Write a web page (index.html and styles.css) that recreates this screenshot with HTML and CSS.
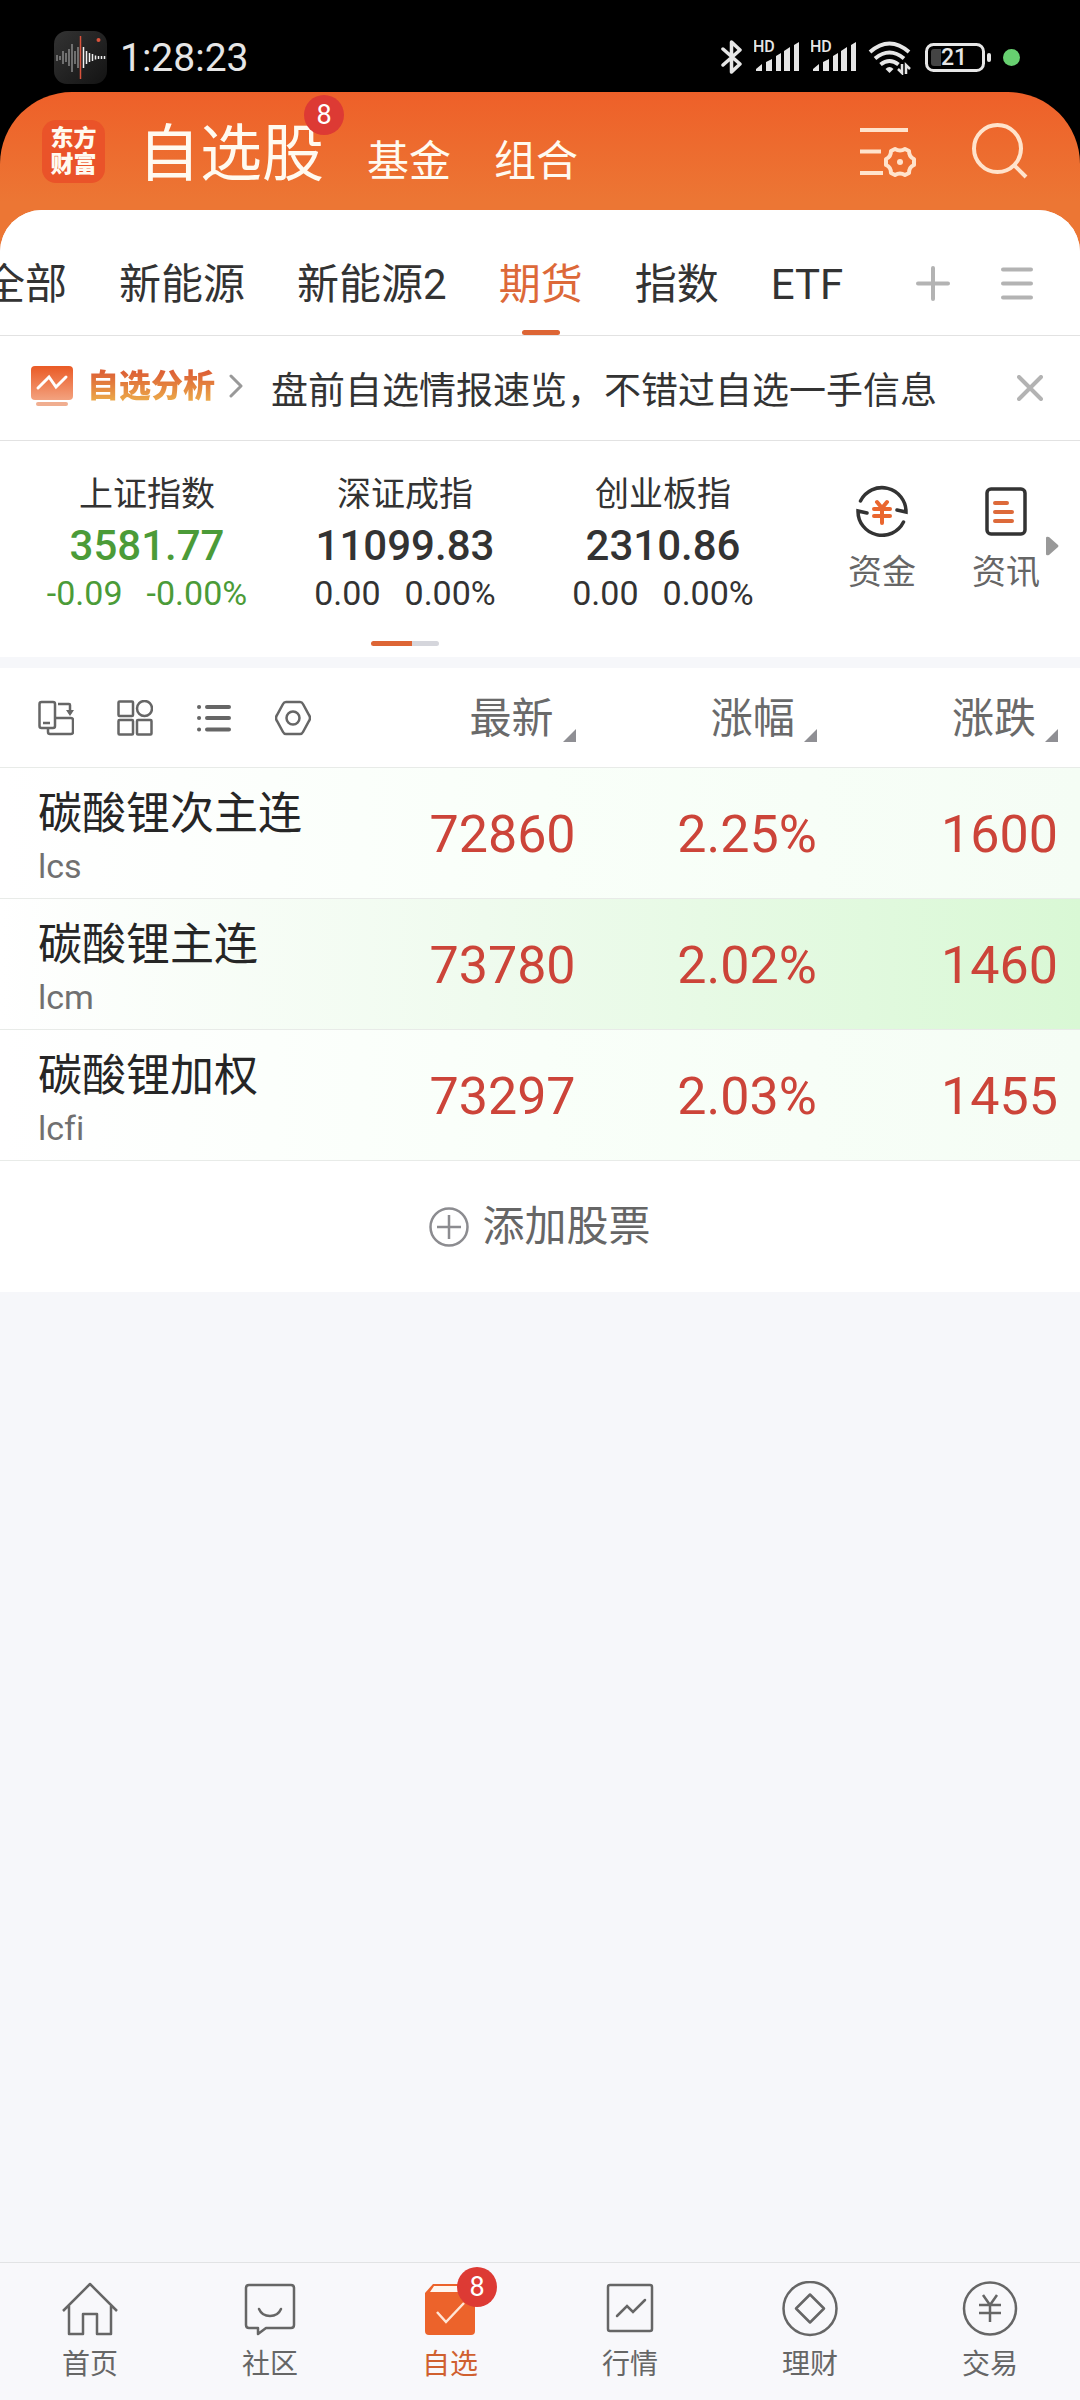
FILE: index.html
```
<!DOCTYPE html>
<html lang="zh-CN">
<head>
  <meta charset="UTF-8">
  <meta name="viewport" content="width=device-width, initial-scale=1.0">
  <title>自选股</title>
  <link rel="stylesheet" href="styles.css">
</head>
<body>
  <div class="screen">

    <div class="status-bar">
      <svg class="recorder" width="53" height="53" viewBox="0 0 53 53">
        <defs>
          <linearGradient id="rec" x1="0" y1="0" x2="1" y2="1">
            <stop offset="0" stop-color="#333"/>
            <stop offset="1" stop-color="#131313"/>
          </linearGradient>
        </defs>
        <rect width="53" height="53" rx="13" fill="url(#rec)"/>
        <path d="M3 24v6M6 25v4M9 20v13M12 22v9M15 18v17M18 13v28M21 20v13M24 16v21" stroke="#888" stroke-width="1.5"/>
        <path d="M29.500 16v21M32.500 20v13M35.500 22v9M38.500 23v7M41.500 24.500v4M44.500 25v3M47.500 25v3M50.500 25v3" stroke="#f0f0f0" stroke-width="1.500"/>
        <path d="M26.500 5v43" stroke="#d9533c" stroke-width="1.500"/>
        <circle cx="44.500" cy="9" r="2" fill="#d9533c"/>
      </svg>
      <span class="clock">1:28:23</span>
      <div class="status-icons">
        <svg width="21" height="36" viewBox="0 0 21 36" fill="none" stroke="#e6e6e6" stroke-width="3.500" stroke-linecap="round" stroke-linejoin="round">
          <path d="M2 10l17 15-8.500 8V3l8.500 8L2 26"/>
        </svg>
        <svg width="45" height="36" viewBox="0 0 45 36" fill="#e6e6e6">
          <text class="hd" x="-1" y="13">HD</text>
          <path d="M2 30l6-5v7H2zM12 23l6-3v12h-6zM22 17l5-3v18h-5zM30 12l6-4v24h-6zM40 6l5-3v29h-5z"/>
        </svg>
        <svg width="45" height="36" viewBox="0 0 45 36" fill="#e6e6e6">
          <text class="hd" x="-1" y="13">HD</text>
          <path d="M2 30l6-5v7H2zM12 23l6-3v12h-6zM22 17l5-3v18h-5zM30 12l6-4v24h-6zM40 6l5-3v29h-5z"/>
        </svg>
        <svg width="45" height="36" viewBox="0 0 45 36" fill="none" stroke="#e6e6e6" stroke-width="4">
          <path d="M2 13q19.500-17 39 0M7 19.500q14.500-12 29 0M12.500 25.500q9-7 18 0"/>
          <path d="M21.500 34l-4-4q4-4 8 0z" fill="#e6e6e6" stroke="none"/>
          <path d="M34 25v9l-4-4M38 35v-9l4 4" stroke-width="2.500"/>
        </svg>
        <svg width="66" height="30" viewBox="0 0 66 30">
          <rect x="1.500" y="2.500" width="57" height="26" rx="7" fill="none" stroke="#e6e6e6" stroke-width="3"/>
          <path d="M9 7h7v17H9q-3 0-3-3V10q0-3 3-3z" fill="#444"/>
          <rect x="62" y="11" width="4" height="9" rx="2" fill="#e6e6e6"/>
          <text class="level" x="29" y="23" text-anchor="middle">21</text>
        </svg>
        <span class="mic-dot"></span>
      </div>
    </div>

    <div class="shell">
      <header class="header">
        <a class="logo" href="#">东方<br>财富</a>
        <nav class="sections">
          <a class="section current" href="#">自选股<span class="badge">8</span></a>
          <a class="section" href="#">基金</a>
          <a class="section" href="#">组合</a>
        </nav>
        <div class="header-actions">
          <button type="button" aria-label="列表设置">
            <svg width="56" height="56" viewBox="0 0 56 56" fill="none" stroke="#ffe3cc" stroke-width="4">
              <path d="M0 7h48M0 28.500h21M0 50h23"/>
              <path d="M35 26q5 3 10 0l4 2q0 6 5 8v6q-5 2-5 8l-4 2q-5-3-10 0l-4-2q0-6-5-8v-6q5-2 5-8z" stroke-linejoin="round"/>
              <circle cx="40" cy="39" r="3" fill="#ffe3cc" stroke="none"/>
            </svg>
          </button>
          <button type="button" aria-label="搜索">
            <svg width="56" height="56" viewBox="0 0 56 56" fill="none" stroke="#ffe3cc" stroke-width="4">
              <circle cx="25.500" cy="25.500" r="23.500"/>
              <path d="M42 42l12 12"/>
            </svg>
          </button>
        </div>
      </header>

      <main class="sheet">
        <div class="groups">
          <nav class="group-list">
            <a href="#">全部</a>
            <a href="#">新能源</a>
            <a href="#">新能源2</a>
            <a class="active" href="#">期货</a>
            <a href="#">指数</a>
            <a href="#">ETF</a>
          </nav>
          <div class="group-actions">
            <button type="button" aria-label="添加分组">
              <svg width="34" height="36" viewBox="0 0 34 36" stroke="#b3b3b3" stroke-width="4" stroke-linecap="round">
                <path d="M17 3v31M2 18.500h30"/>
              </svg>
            </button>
            <button type="button" aria-label="管理分组">
              <svg width="34" height="36" viewBox="0 0 34 36" stroke="#b3b3b3" stroke-width="4" stroke-linecap="round">
                <path d="M3 4.500h28M3 18.500h28M3 32.500h28"/>
              </svg>
            </button>
          </div>
        </div>

        <div class="notice">
          <a class="analysis" href="#">
            <svg width="42" height="40" viewBox="0 0 42 40">
              <defs>
                <linearGradient id="chart" x1="0" y1="0" x2="0" y2="1">
                  <stop offset="0" stop-color="#ea5a25"/>
                  <stop offset="1" stop-color="#f3a27f"/>
                </linearGradient>
              </defs>
              <rect width="42" height="34" rx="4" fill="url(#chart)"/>
              <path d="M7 22l11-11 7 10 10-10" fill="none" stroke="#fff" stroke-width="3" stroke-linecap="round"/>
              <rect x="5" y="36" width="32" height="4" rx="2" fill="#f0ae90"/>
            </svg>
            <strong>自选分析</strong>
            <svg width="14" height="24" viewBox="0 0 14 24" fill="none" stroke="#999" stroke-width="3" stroke-linecap="round" stroke-linejoin="round">
              <path d="M2 2l10 10L2 22"/>
            </svg>
          </a>
          <a class="notice-text" href="#">盘前自选情报速览，不错过自选一手信息</a>
          <button type="button" aria-label="关闭">
            <svg width="26" height="26" viewBox="0 0 26 26" stroke="#b3b3b3" stroke-width="4" stroke-linecap="round">
              <path d="M2 2l22 22M24 2L2 24"/>
            </svg>
          </button>
        </div>

        <section class="market">
          <div class="quotes">
            <div class="quote-row">
              <div class="quote down">
                <span class="quote-name">上证指数</span>
                <span class="quote-value">3581.77</span>
                <span class="quote-change"><span>-0.09</span><span>-0.00%</span></span>
              </div>
              <div class="quote">
                <span class="quote-name">深证成指</span>
                <span class="quote-value">11099.83</span>
                <span class="quote-change"><span>0.00</span><span>0.00%</span></span>
              </div>
              <div class="quote">
                <span class="quote-name">创业板指</span>
                <span class="quote-value">2310.86</span>
                <span class="quote-change"><span>0.00</span><span>0.00%</span></span>
              </div>
            </div>
            <div class="pager"></div>
          </div>
          <div class="shortcuts">
            <a class="shortcut" href="#">
              <svg width="52" height="52" viewBox="0 0 52 52" fill="none" stroke="#333" stroke-width="3.500" stroke-linecap="round">
                <path d="M4.500 16A24 24 0 0 1 50 27l-9-2"/>
                <path d="M47.500 37A24 24 0 0 1 2 26l9 2"/>
                <path d="M21 17l5 6 5-6M18 24h16M18 31h16M26 24v14" stroke="#ea662e" stroke-width="4"/>
              </svg>
              <span>资金</span>
            </a>
            <a class="shortcut" href="#">
              <svg width="52" height="52" viewBox="0 0 52 52" fill="none" stroke="#333" stroke-width="3.500" stroke-linecap="round">
                <rect x="7" y="4" width="38" height="45" rx="4"/>
                <path d="M15 18h12M15 27h17M15 36h17" stroke="#dd6a3a" stroke-width="4"/>
              </svg>
              <span>资讯</span>
            </a>
            <svg class="more" width="13" height="20" viewBox="0 0 13 20" fill="#999">
              <path d="M0 2q0-2 3-1l9 8q1 1 0 2l-9 8q-3 1-3-1z"/>
            </svg>
          </div>
        </section>

        <table class="stocks">
          <thead>
            <tr>
              <th>
                <div class="tools">
                  <button type="button" aria-label="横屏">
                    <svg width="36" height="36" viewBox="0 0 36 36" fill="none" stroke="#666" stroke-width="2.500">
                      <rect x="1.500" y="2" width="15.500" height="26" rx="2"/>
                      <path d="M17 18h16q2 0 2 2v12q0 2-2 2H12q-2 0-2-2v-4M20 4h11q1 0 1 1v9M5 23h7"/>
                      <path d="M28 10h8l-4 6z" fill="#666" stroke="none"/>
                    </svg>
                  </button>
                  <button type="button" aria-label="宫格">
                    <svg width="36" height="36" viewBox="0 0 36 36" fill="none" stroke="#666" stroke-width="2.500">
                      <rect x="1.500" y="1.500" width="14.500" height="14.500" rx="1"/>
                      <circle cx="27.500" cy="8.500" r="7.500"/>
                      <rect x="1.500" y="20" width="14.500" height="14.500" rx="1"/>
                      <rect x="20" y="20" width="14.500" height="14.500" rx="1"/>
                    </svg>
                  </button>
                  <button type="button" aria-label="列表">
                    <svg width="36" height="36" viewBox="0 0 36 36" fill="none" stroke="#666" stroke-width="4" stroke-linecap="round">
                      <path d="M3 7h.1M3 18h.1M3 29.500h.1M11 7h22M11 18h22M11 29.500h22"/>
                    </svg>
                  </button>
                  <button type="button" aria-label="设置">
                    <svg width="36" height="36" viewBox="0 0 36 36" fill="none" stroke="#666" stroke-width="2.500">
                      <path d="M11 2h14q2 0 3 2l6 11q2 3 0 6l-6 11q-1 2-3 2H11q-2 0-3-2L2 21q-2-3 0-6L8 4q1-2 3-2z"/>
                      <circle cx="18" cy="18" r="6.500"/>
                    </svg>
                  </button>
                </div>
              </th>
              <th><button class="sort" type="button">最新</button></th>
              <th><button class="sort" type="button">涨幅</button></th>
              <th><button class="sort" type="button">涨跌</button></th>
            </tr>
          </thead>
          <tbody>
            <tr>
              <td><span class="name">碳酸锂次主连</span><span class="code">lcs</span></td>
              <td>72860</td>
              <td>2.25%</td>
              <td>1600</td>
            </tr>
            <tr class="flash">
              <td><span class="name">碳酸锂主连</span><span class="code">lcm</span></td>
              <td>73780</td>
              <td>2.02%</td>
              <td>1460</td>
            </tr>
            <tr>
              <td><span class="name">碳酸锂加权</span><span class="code">lcfi</span></td>
              <td>73297</td>
              <td>2.03%</td>
              <td>1455</td>
            </tr>
          </tbody>
        </table>

        <button class="add-stock" type="button">
          <svg width="40" height="40" viewBox="0 0 40 40" fill="none" stroke="#8c8c90" stroke-width="2.500">
            <circle cx="20" cy="20" r="18.500"/>
            <path d="M20 8v24M8 20h24"/>
          </svg>
          添加股票
        </button>
      </main>

      <nav class="tab-bar">
        <a class="tab" href="#">
          <svg width="58" height="58" viewBox="0 0 58 58" fill="none" stroke="#666" stroke-width="2.500" stroke-linejoin="round">
            <path d="M2 30L29 3l27 27M8 25v28h14V33h14v20h14V25"/>
          </svg>
          <span>首页</span>
        </a>
        <a class="tab" href="#">
          <svg width="58" height="58" viewBox="0 0 58 58" fill="none" stroke="#666" stroke-width="2.500" stroke-linejoin="round">
            <path d="M8 4h42q3 0 3 3v37q0 3-3 3H25l-8 6v-6H8q-3 0-3-3V7q0-3 3-3z"/>
            <path d="M18 28q3 7 11 7t11-7" stroke-linecap="round"/>
          </svg>
          <span>社区</span>
        </a>
        <a class="tab current" href="#">
          <svg width="58" height="58" viewBox="0 0 58 58">
            <path d="M12 3h34l8 10v37q0 4-4 4H8q-4 0-4-4V12z" fill="#ec632b"/>
            <path d="M13 5h32l5 6H9z" fill="#fff6ef"/>
            <path d="M16 31l9 10 18-19" fill="none" stroke="#ffe5d5" stroke-width="2.500"/>
          </svg>
          <span>自选</span>
          <span class="badge">8</span>
        </a>
        <a class="tab" href="#">
          <svg width="58" height="58" viewBox="0 0 58 58" fill="none" stroke="#666" stroke-width="2.500">
            <rect x="7" y="4" width="44" height="46" rx="2"/>
            <path d="M16 35l10-10 6 6 12-12" stroke-linecap="round"/>
          </svg>
          <span>行情</span>
        </a>
        <a class="tab" href="#">
          <svg width="58" height="58" viewBox="0 0 58 58" fill="none" stroke="#666" stroke-width="2.500" stroke-linejoin="round">
            <circle cx="29" cy="27.500" r="26.500"/>
            <path d="M29 13.500l14 14-14 14-14-14z"/>
          </svg>
          <span>理财</span>
        </a>
        <a class="tab" href="#">
          <svg width="58" height="58" viewBox="0 0 58 58" fill="none" stroke="#666" stroke-width="2.500">
            <circle cx="29" cy="27.500" r="26"/>
            <path d="M22 14l7 10 7-10M18 24h22M18 32h22M29 24v17"/>
          </svg>
          <span>交易</span>
        </a>
      </nav>
    </div>

  </div>
</body>
</html>
```
FILE: styles.css
```
* {
  box-sizing: border-box;
}

body {
  margin: 0;
  font-family: Roboto, "Noto Sans CJK SC", sans-serif;
  font-variant-ligatures: none;
  color: #333;
}

a {
  color: inherit;
  text-decoration: none;
}

button {
  padding: 0;
  border: none;
  background: none;
  color: inherit;
  font: inherit;
  cursor: pointer;
}

svg {
  display: block;
  flex: none;
}

.screen {
  display: flex;
  flex-direction: column;
  min-height: 100vh;
  background-color: #000;
}

/* phone status bar */
.status-bar {
  display: flex;
  align-items: center;
  height: 92px;
  padding: 22px 60px 0 54px;
  color: #e6e6e6;
}

.clock {
  padding-top: 2px;
  margin-left: 13px;
  font-size: 39px;
}

.status-icons {
  display: flex;
  align-items: center;
  gap: 12px;
  margin-left: auto;
}

.hd {
  font-size: 16px;
  font-weight: 500;
}

.level {
  font-size: 23px;
  font-weight: 500;
  fill: #e6e6e6;
}

.mic-dot {
  width: 17px;
  height: 17px;
  border-radius: 50%;
  background-color: #67d070;
}

/* header */
.shell {
  flex: 1;
  display: flex;
  flex-direction: column;
  border-radius: 72px 72px 0 0;
  background: linear-gradient(#ee6029, #ec7634 110px);
}

.header {
  display: flex;
  align-items: center;
  height: 118px;
  padding: 0 52px 0 42px;
  color: #fffaf0;
}

.logo {
  width: 63px;
  height: 63px;
  padding-top: 6px;
  border-radius: 14px;
  background-color: #ea5329;
  font-size: 23px;
  font-weight: 900;
  line-height: 26px;
  text-align: center;
}

.sections {
  display: flex;
  align-items: baseline;
  gap: 43px;
  margin-left: 33px;
  padding-top: 14px;
}

.section {
  position: relative;
  font-size: 42px;
  line-height: 80px;
}

.section.current {
  font-size: 62px;
}

.badge {
  position: absolute;
  top: -20px;
  right: -20px;
  width: 40px;
  height: 40px;
  border-radius: 50%;
  background-color: #dd3a34;
  color: #fff;
  font-size: 27px;
  line-height: 40px;
  text-align: center;
}

.header-actions {
  display: flex;
  gap: 56px;
  margin-left: auto;
}

.sheet {
  flex: 1;
  border-radius: 42px 42px 0 0;
  background-color: #f6f7fa;
  overflow: hidden;
}

/* watchlist groups */
.groups {
  display: flex;
  align-items: center;
  justify-content: space-between;
  height: 126px;
  padding-right: 46px;
  border-bottom: 1px solid #e2e2e2;
  background-color: #fff;
}

.group-list {
  display: flex;
  gap: 52px;
  margin-left: -17px;
  font-size: 42px;
  line-height: 100px;
  white-space: nowrap;
}

.group-list a {
  position: relative;
  padding-top: 25px;
}

.group-list .active {
  color: #dd6939;
}

.group-list .active::after {
  content: "";
  position: absolute;
  bottom: 0;
  left: 50%;
  width: 38px;
  height: 5px;
  margin-left: -19px;
  border-radius: 3px;
  background-color: #dd6535;
}

.group-actions {
  display: flex;
  gap: 50px;
  padding-top: 20px;
}

.notice {
  display: flex;
  align-items: center;
  height: 105px;
  padding: 0 37px 0 31px;
  border-bottom: 1px solid #e2e2e2;
  background-color: #fff;
}

.analysis {
  display: flex;
  align-items: center;
  gap: 14px;
  padding-bottom: 4px;
}

.analysis strong {
  background: linear-gradient(#dd6236 20%, #eba548 80%);
  background-clip: text;
  -webkit-background-clip: text;
  color: transparent;
  font-size: 32px;
  font-weight: 900;
  line-height: 44px;
}

.notice-text {
  margin-left: 28px;
  font-size: 37px;
  white-space: nowrap;
}

.notice button {
  margin-left: auto;
}

/* index quotes */
.market {
  display: flex;
  margin-bottom: 11px;
  padding: 0 12px 0 18px;
  background-color: #fff;
}

.quotes {
  flex: 1;
  padding: 30px 0 11px;
}

.quote-row {
  display: grid;
  grid-template-columns: repeat(3, 1fr);
}

.quote {
  display: flex;
  flex-direction: column;
  align-items: center;
}

.quote-name {
  font-size: 34px;
  line-height: 46px;
}

.quote-value {
  font-size: 42px;
  font-weight: 500;
  line-height: 58px;
}

.quote-change {
  display: flex;
  gap: 24px;
  font-size: 34px;
  line-height: 36px;
}

.down .quote-value,
.down .quote-change {
  color: #4b9b38;
}

.pager {
  width: 68px;
  height: 5px;
  margin: 30px auto 0;
  border-radius: 3px;
  background: linear-gradient(90deg, #dd6535 60%, #d5d6dc 60%);
}

.shortcuts {
  position: relative;
  display: flex;
  margin-left: 28px;
  padding-top: 44px;
}

.shortcut {
  display: flex;
  flex-direction: column;
  align-items: center;
  gap: 13px;
  width: 124px;
  color: #666;
  font-size: 34px;
  line-height: 44px;
}

.more {
  position: absolute;
  top: 95px;
  right: 9px;
}

/* stock table */
.stocks {
  width: 100%;
  border-spacing: 0;
  table-layout: fixed;
  background-color: #fff;
}

.stocks th,
.stocks td {
  padding: 2px 22px 0 0;
  border-bottom: 1px solid #e8ebe8;
  text-align: right;
}

.stocks th {
  height: 100px;
  color: #6a6a6a;
  font-weight: normal;
}

.stocks th:first-child,
.stocks td:first-child {
  width: 33%;
  padding-top: 0;
  padding-left: 38px;
  padding-right: 0;
  text-align: left;
}

.tools {
  display: flex;
  gap: 43px;
}

.sort {
  position: relative;
  padding-right: 22px;
  font-size: 42px;
  line-height: 56px;
}

.sort::after {
  content: "";
  position: absolute;
  right: 0;
  bottom: 5px;
  border-left: 13px solid transparent;
  border-bottom: 13px solid #8f8f94;
}

.stocks tbody tr {
  background: linear-gradient(90deg, #fff, #f9fff9 50%, #f5fdf5);
}

.stocks tbody .flash {
  background: linear-gradient(90deg, #fff, #effbee 45%, #d9f8d5);
}

.stocks td {
  height: 131px;
  color: #cc4439;
  font-size: 52px;
}

.name,
.code {
  display: block;
}

.name {
  padding-top: 10px;
  color: #262626;
  font-size: 44px;
  line-height: 56px;
  white-space: nowrap;
}

.code {
  color: #707070;
  font-size: 34px;
  line-height: 48px;
}

.add-stock {
  display: flex;
  align-items: center;
  justify-content: center;
  gap: 13px;
  width: 100%;
  height: 131px;
  background-color: #fff;
  color: #666;
  font-size: 42px;
  line-height: 60px;
}

/* bottom navigation */
.tab-bar {
  display: flex;
  height: 138px;
  border-top: 1px solid #e2e3e5;
  background-color: #f8f8fb;
}

.tab {
  position: relative;
  flex: 1;
  display: flex;
  flex-direction: column;
  align-items: center;
  gap: 6px;
  padding-top: 18px;
  color: #666;
  font-size: 28px;
  line-height: 40px;
}

.tab.current {
  color: #d0602f;
}

.tab .badge {
  top: 4px;
  right: 43px;
}
```
